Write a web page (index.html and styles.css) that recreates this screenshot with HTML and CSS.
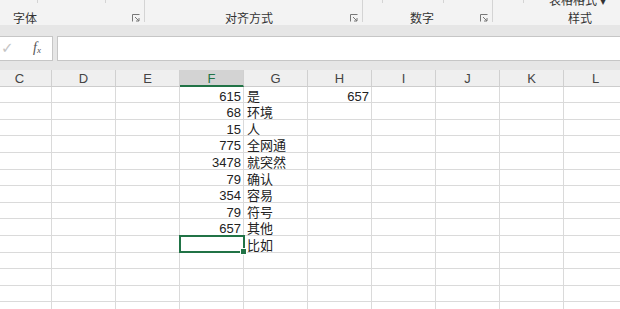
FILE: index.html
```html
<!DOCTYPE html>
<html lang="zh-CN">
<head>
  <meta charset="UTF-8">
  <title>Sheet1</title>
  <link rel="stylesheet" href="styles.css">
</head>
<body>
  <div class="ribbon">
    <div class="group g-font">
      <span class="tick t1"></span><span class="tick t2"></span>
      <span class="glabel">字体</span>
      <svg class="launch" width="8" height="8" viewBox="0 0 8 8"><path d="M0.5 7.5V0.5H7.5" fill="none" stroke="#777"/><path d="M3 3L7 7M4 7H7V4" fill="none" stroke="#777"/></svg>
    </div>
    <div class="group g-align">
      <span class="glabel">对齐方式</span>
      <svg class="launch" width="8" height="8" viewBox="0 0 8 8"><path d="M0.5 7.5V0.5H7.5" fill="none" stroke="#777"/><path d="M3 3L7 7M4 7H7V4" fill="none" stroke="#777"/></svg>
    </div>
    <div class="group g-num">
      <span class="tick t3"></span><span class="tick t4"></span>
      <span class="glabel">数字</span>
      <svg class="launch" width="8" height="8" viewBox="0 0 8 8"><path d="M0.5 7.5V0.5H7.5" fill="none" stroke="#777"/><path d="M3 3L7 7M4 7H7V4" fill="none" stroke="#777"/></svg>
    </div>
    <div class="group g-style">
      <span class="tick t5"></span>
      <span class="toptext">表格格式 ▾</span>
      <span class="glabel">样式</span>
    </div>
  </div>

  <div class="fbar">
    <div class="namebox"><span class="chk">✓</span><span class="fx">f<sub>x</sub></span></div>
    <div class="finput"></div>
  </div>

  <div class="sheet">
    <div class="ch">C</div><div class="ch">D</div><div class="ch">E</div><div class="ch active">F</div><div class="ch">G</div>
    <div class="ch">H</div><div class="ch">I</div><div class="ch">J</div><div class="ch">K</div><div class="ch">L</div>

    <div class="c"></div><div class="c"></div><div class="c"></div><div class="c num">615</div><div class="c">是</div>
    <div class="c num">657</div><div class="c"></div><div class="c"></div><div class="c"></div><div class="c"></div>

    <div class="c"></div><div class="c"></div><div class="c"></div><div class="c num">68</div><div class="c">环境</div>
    <div class="c"></div><div class="c"></div><div class="c"></div><div class="c"></div><div class="c"></div>

    <div class="c"></div><div class="c"></div><div class="c"></div><div class="c num">15</div><div class="c">人</div>
    <div class="c"></div><div class="c"></div><div class="c"></div><div class="c"></div><div class="c"></div>

    <div class="c"></div><div class="c"></div><div class="c"></div><div class="c num">775</div><div class="c">全网通</div>
    <div class="c"></div><div class="c"></div><div class="c"></div><div class="c"></div><div class="c"></div>

    <div class="c"></div><div class="c"></div><div class="c"></div><div class="c num">3478</div><div class="c">就突然</div>
    <div class="c"></div><div class="c"></div><div class="c"></div><div class="c"></div><div class="c"></div>

    <div class="c"></div><div class="c"></div><div class="c"></div><div class="c num">79</div><div class="c">确认</div>
    <div class="c"></div><div class="c"></div><div class="c"></div><div class="c"></div><div class="c"></div>

    <div class="c"></div><div class="c"></div><div class="c"></div><div class="c num">354</div><div class="c">容易</div>
    <div class="c"></div><div class="c"></div><div class="c"></div><div class="c"></div><div class="c"></div>

    <div class="c"></div><div class="c"></div><div class="c"></div><div class="c num">79</div><div class="c">符号</div>
    <div class="c"></div><div class="c"></div><div class="c"></div><div class="c"></div><div class="c"></div>

    <div class="c"></div><div class="c"></div><div class="c"></div><div class="c num">657</div><div class="c">其他</div>
    <div class="c"></div><div class="c"></div><div class="c"></div><div class="c"></div><div class="c"></div>

    <div class="c"></div><div class="c"></div><div class="c"></div><div class="c sel"><span class="handle"></span></div><div class="c">比如</div>
    <div class="c"></div><div class="c"></div><div class="c"></div><div class="c"></div><div class="c"></div>

    <div class="c"></div><div class="c"></div><div class="c"></div><div class="c"></div><div class="c"></div>
    <div class="c"></div><div class="c"></div><div class="c"></div><div class="c"></div><div class="c"></div>

    <div class="c"></div><div class="c"></div><div class="c"></div><div class="c"></div><div class="c"></div>
    <div class="c"></div><div class="c"></div><div class="c"></div><div class="c"></div><div class="c"></div>

    <div class="c"></div><div class="c"></div><div class="c"></div><div class="c"></div><div class="c"></div>
    <div class="c"></div><div class="c"></div><div class="c"></div><div class="c"></div><div class="c"></div>

    <div class="c"></div><div class="c"></div><div class="c"></div><div class="c"></div><div class="c"></div>
    <div class="c"></div><div class="c"></div><div class="c"></div><div class="c"></div><div class="c"></div>
  </div>
</body>
</html>
```

FILE: styles.css
```css
html, body {
  margin: 0;
  padding: 0;
  width: 620px;
  height: 309px;
  overflow: hidden;
  background: #e6e6e6;
  font-family: "Liberation Sans", "Noto Sans CJK SC", sans-serif;
  color: #222;
}

/* ribbon */
.ribbon {
  display: flex;
  height: 25px;
  background: #f3f3f3;
}

.group {
  position: relative;
  flex: none;
  border-right: 1px solid #d4d4d4;
  box-sizing: border-box;
  height: 22px;
}

.g-font { width: 145px; }
.g-align { width: 218px; }
.g-num { width: 130px; }
.g-style { width: 127px; border-right: none; }

.glabel {
  position: absolute;
  top: 11px;
  font-size: 12px;
  line-height: 14px;
  color: #333;
  font-family: "Noto Sans CJK SC", sans-serif;
}

.g-font .glabel { left: 13px; }
.g-align .glabel { left: 80px; }
.g-num .glabel { left: 47px; }
.g-style .glabel { left: 75px; }

.launch {
  position: absolute;
  top: 14px;
  right: 4px;
}

.tick {
  position: absolute;
  top: 0;
  width: 1px;
  height: 3px;
  background: #d4d4d4;
}

.t1 { left: 37px; }
.t2 { left: 105px; }
.t3 { left: 19px; }
.t4 { left: 80px; }
.t5 { left: 30px; }

/* only the lower half of this line shows in the reference */
.toptext {
  position: absolute;
  top: -7px;
  left: 56px;
  font-size: 12px;
  line-height: 14px;
  color: #333;
  font-family: "Noto Sans CJK SC", sans-serif;
}

/* formula bar */
.fbar {
  display: flex;
  gap: 4px;
  height: 25px;
  margin-top: 11px;
}

.namebox, .finput {
  background: #fff;
  border: 1px solid #c6c6c6;
  box-sizing: border-box;
  height: 25px;
}

.namebox {
  width: 53px;
  border-left: none;
  position: relative;
}

.finput {
  flex: 1;
  border-right: none;
}

.chk {
  position: absolute;
  left: 1px;
  top: 2px;
  font-size: 15px;
  color: #c4c4c4;
  font-family: "DejaVu Sans", sans-serif;
}

.fx {
  position: absolute;
  left: 33px;
  top: 3px;
  font-family: "Liberation Serif", serif;
  font-style: italic;
  font-size: 14px;
  color: #555;
}

.fx sub {
  font-size: 9px;
  vertical-align: -1px;
}

/* sheet */
.sheet {
  display: grid;
  grid-template-columns: repeat(10, 64px);
  grid-auto-rows: 16.6px;
  margin-top: 9px;
  margin-left: -12px;
  background: #fff;
}

.ch {
  background: #efefef;
  border-right: 1px solid #d0d0d0;
  border-bottom: 1px solid #cdcdcd;
  box-sizing: border-box;
  font-size: 13px;
  line-height: 16px;
  padding-top: 1px;
  text-align: center;
  color: #444;
}

.ch.active {
  background: #d3d3d3;
  color: #217346;
  border-bottom: 2px solid #217346;
}

.c {
  position: relative;
  border-right: 1px solid #dadada;
  border-bottom: 1px solid #dadada;
  box-sizing: border-box;
  font-size: 13px;
  line-height: 17px;
  padding: 1px 3px 0;
  white-space: nowrap;
  color: #222;
}

.num {
  text-align: right;
  padding-right: 2px;
}

.sel {
  border: 2px solid #217346;
  margin: -1px -1px 0 -1px;
  z-index: 2;
}

.handle {
  position: absolute;
  right: -4px;
  bottom: -4px;
  width: 5px;
  height: 5px;
  background: #217346;
  border: 1px solid #fff;
}
```
